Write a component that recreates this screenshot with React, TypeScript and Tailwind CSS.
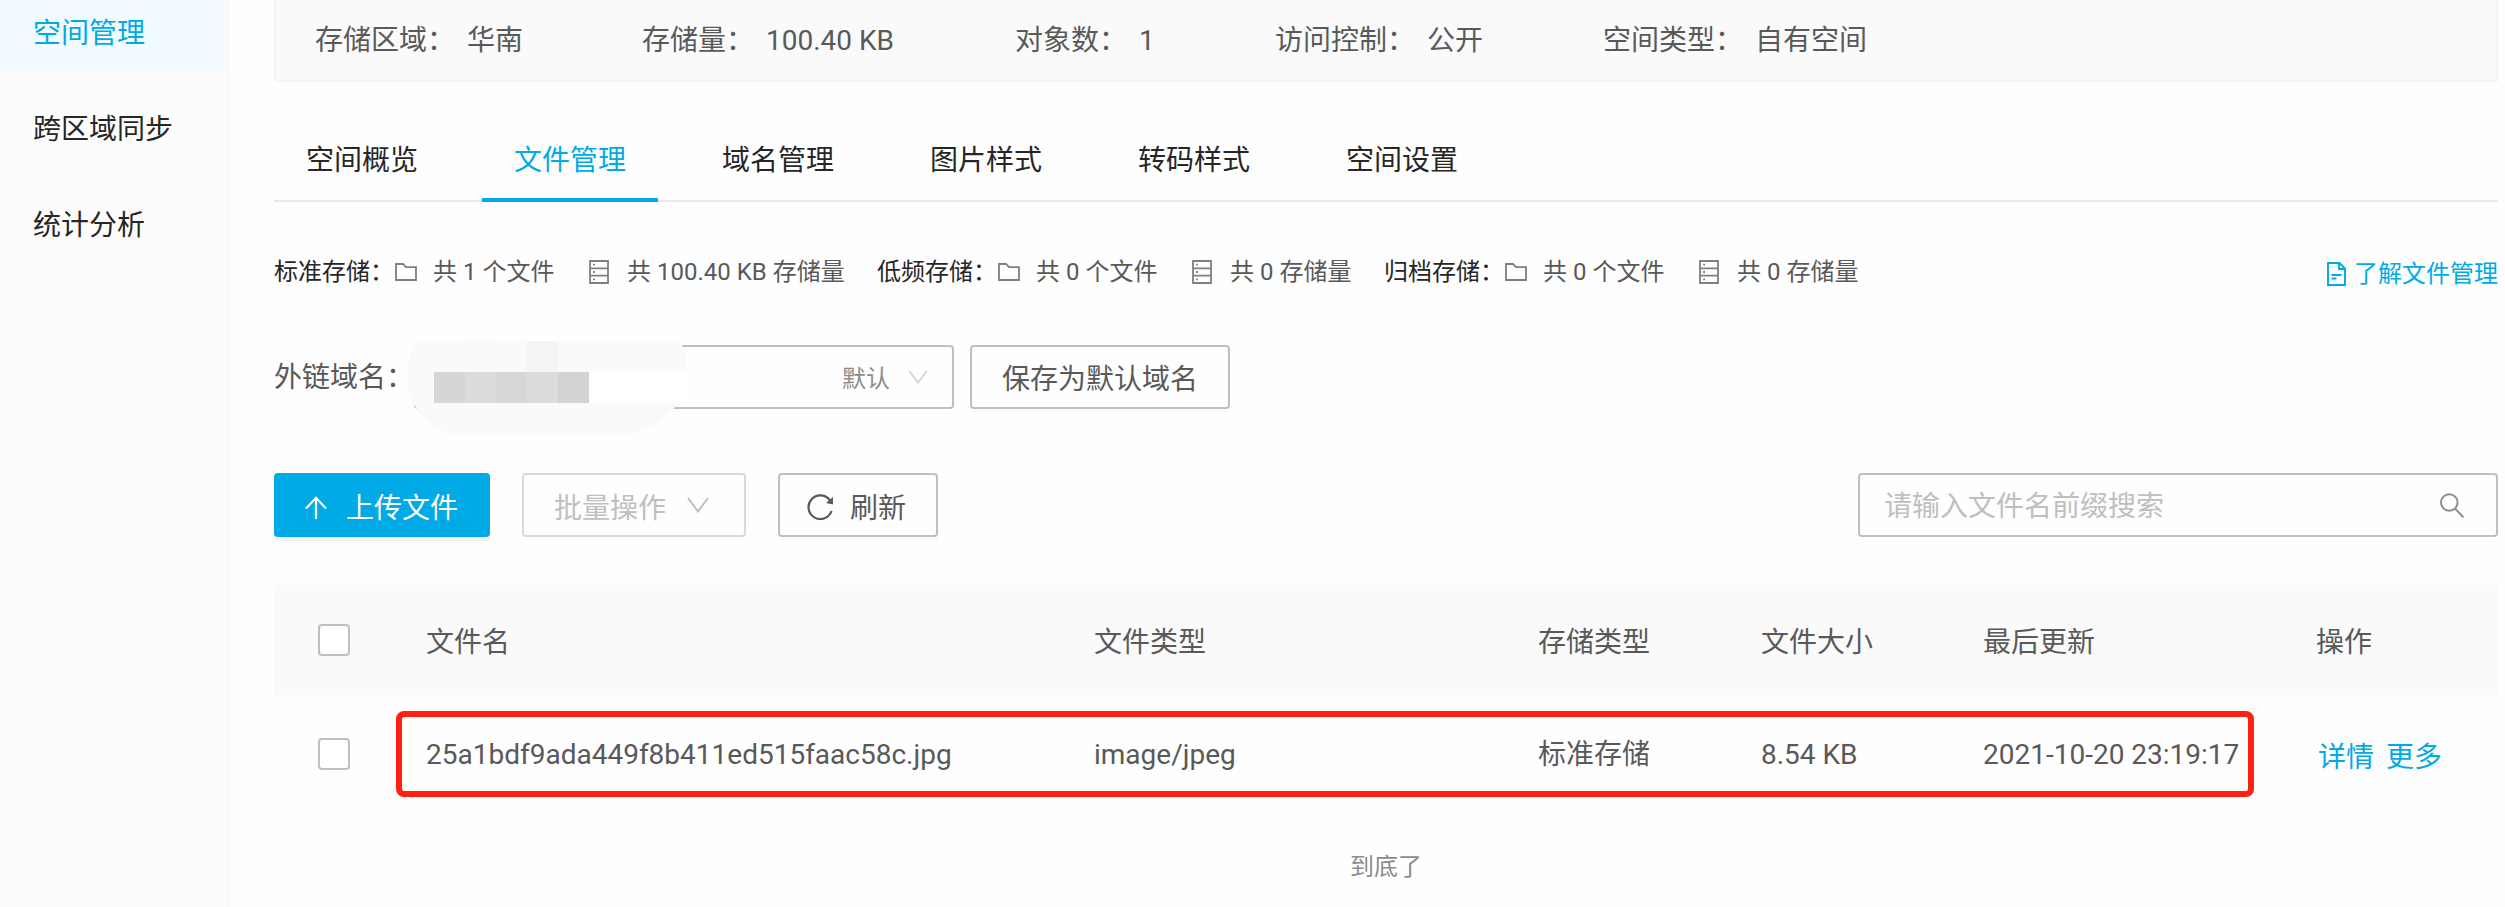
import { ReactNode } from "react";

const NAV = ["空间管理", "跨区域同步", "统计分析"];

const INFO = [
  { label: "存储区域：", value: "华南", width: "w-[327px]" },
  { label: "存储量：", value: "100.40 KB", width: "w-[373px]" },
  { label: "对象数：", value: "1", width: "w-[260px]" },
  { label: "访问控制：", value: "公开", width: "w-[328px]" },
  { label: "空间类型：", value: "自有空间", width: "" },
];

const TABS = ["空间概览", "文件管理", "域名管理", "图片样式", "转码样式", "空间设置"];

const STORAGE = [
  { label: "标准存储：", files: "共 1 个文件", size: "共 100.40 KB 存储量", width: "w-[603px]" },
  { label: "低频存储：", files: "共 0 个文件", size: "共 0 存储量", width: "w-[507px]" },
  { label: "归档存储：", files: "共 0 个文件", size: "共 0 存储量", width: "" },
];

const FILES = [
  {
    name: "25a1bdf9ada449f8b411ed515faac58c.jpg",
    type: "image/jpeg",
    storage: "标准存储",
    size: "8.54 KB",
    updated: "2021-10-20 23:19:17",
  },
];

const COLUMNS = "grid grid-cols-[152px_668px_444px_223px_222px_333px_1fr] items-center";

function FolderIcon() {
  return (
    <svg width="22" height="18" viewBox="0 0 22 18" fill="none" stroke="#7f7f7f" strokeWidth="1.8">
      <path d="M1 1h7l3 3.2h10V17H1z" />
    </svg>
  );
}

function ServerIcon() {
  return (
    <svg width="20" height="24" viewBox="0 0 20 24" fill="none" stroke="#7f7f7f" strokeWidth="1.8">
      <path d="M1 1h18v22H1zM1 8.3h18M1 15.7h18" />
      <path d="M4.200 4.7h1.800M4.200 12h1.800M4.200 19.3h1.800" />
    </svg>
  );
}

function DocIcon() {
  return (
    <svg width="19" height="24" viewBox="0 0 19 24" fill="none" stroke="currentColor" strokeWidth="1.9">
      <path d="M1 1h11.500l5.500 5.500V23H1zM12 1v6h6M4.500 13h10M4.500 16.500h5" />
    </svg>
  );
}

function Chevron({ className }: { className: string }) {
  return (
    <svg viewBox="0 0 22 16" fill="none" stroke="currentColor" strokeWidth="2" className={className}>
      <path d="M1 1l10 13.500L21 1" />
    </svg>
  );
}

function Checkbox() {
  return <span className="ml-11 block size-8 rounded border-2 border-[#bfbfbf] bg-white" />;
}

function Button({ className, children }: { className: string; children: ReactNode }) {
  return (
    <button className={`flex h-16 shrink-0 items-center rounded border-2 text-[28px] ${className}`}>{children}</button>
  );
}

// pixelated patch covering the domain value
function Mosaic() {
  return (
    <svg width="280" height="93" viewBox="0 0 280 93" className="absolute -top-1.5 -left-[9px]">
      <path d="M10 0H273Q280 12 280 31L271 62Q255 86 223 93H41C18 84 0 62 0 36Q0 14 10 0z" fill="#fafafa" />
      <path d="M58 0h31v31H58z" fill="#f8f9f9" />
      <path d="M120 0h31v31h-31z" fill="#f4f4f4" />
      <path d="M182 31h98v31h-98z" fill="#fff" />
      <path d="M27 31h31v31H27z" fill="#d6d6d6" />
      <path d="M58 31h31v31H58z" fill="#dadbdd" />
      <path d="M89 31h31v31H89z" fill="#d7d7d5" />
      <path d="M120 31h31v31h-31z" fill="#dcdcdd" />
      <path d="M151 31h31v31h-31z" fill="#d3d3d3" />
    </svg>
  );
}

export default function App() {
  return (
    <div className="flex h-[907px] w-[2505px] overflow-hidden bg-[#fefefe] font-[Roboto,'Noto_Sans_CJK_SC',sans-serif] text-[28px] leading-none font-normal text-[#595959]">
      <aside className="w-[230px] shrink-0 border-r-4 border-[#fafafa] bg-[#fcfcfc]">
        {NAV.map((item, i) => (
          <div
            key={item}
            className={
              i === 0
                ? "flex h-[72px] items-center bg-[#f2fbff] pb-1 pl-[33px] text-[#00aae7]"
                : "flex h-24 items-end pb-6 pl-[33px] text-[#262626]"
            }
          >
            {item}
          </div>
        ))}
      </aside>

      <main className="ml-11 w-[2224px] shrink-0">
        <section className="flex h-[82px] items-center border-2 border-t-0 border-[#f5f5f5] bg-[#fafafa] pt-0.5 pl-[39px]">
          {INFO.map((item) => (
            <div key={item.label} className={`flex shrink-0 gap-3 ${item.width}`}>
              <span>{item.label}</span>
              <span>{item.value}</span>
            </div>
          ))}
        </section>

        <nav className="flex h-[120px] gap-8 border-b-2 border-[#e8e8e8] pt-9 text-[#262626]">
          {TABS.map((tab) => (
            <div
              key={tab}
              className={
                tab === "文件管理"
                  ? "flex h-[84px] items-center border-b-4 border-[#00aae7] px-8 pt-1.5 text-[#00aae7]"
                  : "flex h-[84px] items-center px-8 pt-0.5"
              }
            >
              {tab}
            </div>
          ))}
        </nav>

        <section className="flex h-[140px] items-center text-2xl leading-none">
          {STORAGE.map((item) => (
            <div key={item.label} className={`flex shrink-0 items-center ${item.width}`}>
              <span className="w-[121px] text-[#262626]">{item.label}</span>
              <FolderIcon />
              <span className="mr-8 ml-4 w-[124px] whitespace-nowrap">{item.files}</span>
              <ServerIcon />
              <span className="ml-[18px]">{item.size}</span>
            </div>
          ))}
          <a className="mt-1 ml-auto flex items-center gap-2 text-[#00aae7]">
            <DocIcon />
            了解文件管理
          </a>
        </section>

        <section className="mt-[3px] flex h-16 items-center">
          <span className="w-[140px] shrink-0 pt-0.5">外链域名：</span>
          <div className="relative flex h-16 w-[540px] items-center justify-end rounded border-2 border-[#bfbfbf] pr-6 text-2xl text-[#8c8c8c]">
            <Mosaic />
            <span className="mr-[18px] pt-1">默认</span>
            <Chevron className="h-3.5 w-5 text-[#d4d4d4]" />
          </div>
          <Button className="ml-4 w-[260px] justify-center border-[#bfbfbf] pt-1.5 shadow-[0_4px_0_#fafafa]">
            保存为默认域名
          </Button>
        </section>

        <section className="mt-16 flex gap-8">
          <Button className="w-[216px] gap-[19px] border-[#00aae7] bg-[#00aae7] pl-[29px] text-white shadow-[0_4px_0_#f3f3f3]">
            <svg width="22" height="23" viewBox="0 0 22 23" fill="none" stroke="currentColor" strokeWidth="2.2" className="mt-1">
              <path d="M11 23V2M1 12.500L11 1.800l10 10.700" />
            </svg>
            <span className="pt-[7px]">上传文件</span>
          </Button>
          <Button className="w-56 gap-[21px] border-[#d9d9d9] pl-[30px] text-[#bfbfbf]">
            <span className="pt-[7px]">批量操作</span>
            <Chevron className="h-4 w-[22px] text-[#bfbfbf]" />
          </Button>
          <Button className="w-40 gap-[17px] border-[#bfbfbf] pl-[27px] shadow-[0_4px_0_#fafafa]">
            <svg width="26" height="26" viewBox="0 0 26 26" fill="none" stroke="currentColor" strokeWidth="2.2" className="mt-1">
              <path d="M24.500 17A11.800 11.800 0 1 1 23 6.500" />
              <path d="M26 3v7.500l-7-1.500z" fill="currentColor" stroke="none" />
            </svg>
            <span className="pt-[7px]">刷新</span>
          </Button>
          <div className="ml-auto flex h-16 w-[640px] items-center justify-between rounded border-2 border-[#bfbfbf] pr-8 pl-6 text-[#bfbfbf]">
            <span className="pt-1">请输入文件名前缀搜索</span>
            <svg width="24" height="25" viewBox="0 0 24 25" fill="none" stroke="#8c8c8c" strokeWidth="2">
              <circle cx="9.300" cy="9.500" r="8.300" />
              <path d="M15.200 15.800l8.300 8.500" />
            </svg>
          </div>
        </section>

        <section className="mt-12">
          <header className={`h-[110px] rounded-t bg-[#fafafa] ${COLUMNS}`}>
            <Checkbox />
            <span className="pt-[5px]">文件名</span>
            <span className="pt-[5px]">文件类型</span>
            <span className="pt-[5px]">存储类型</span>
            <span className="pt-[5px]">文件大小</span>
            <span className="pt-[5px]">最后更新</span>
            <span className="pt-[5px]">操作</span>
          </header>
          {FILES.map((file) => (
            <div key={file.name} className={`relative h-[118px] ${COLUMNS}`}>
              <Checkbox />
              <span className="pt-0.5">{file.name}</span>
              <span className="pt-0.5">{file.type}</span>
              <span className="pt-0.5">{file.storage}</span>
              <span className="pt-0.5">{file.size}</span>
              <span className="pt-0.5">{file.updated}</span>
              <span className="flex gap-3 pt-2 pl-0.5 text-[#00aae7]">
                <a>详情</a>
                <a>更多</a>
              </span>
              <div className="absolute top-4 left-[122px] h-[86px] w-[1858px] rounded-lg border-[6px] border-[#ff2010]" />
            </div>
          ))}
          <p className="pt-[42px] text-center text-2xl leading-none text-[#8c8c8c]">到底了</p>
        </section>
      </main>
    </div>
  );
}
